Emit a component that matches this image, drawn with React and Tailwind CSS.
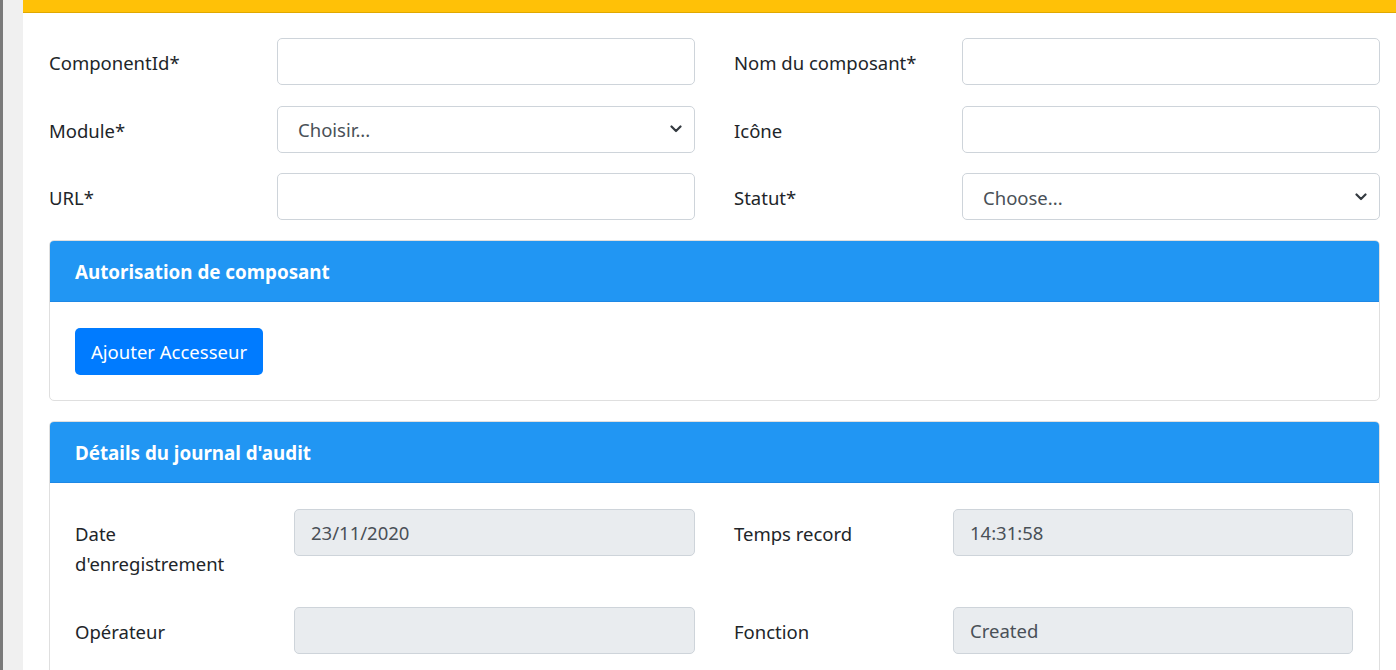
import React from 'react'

const font = { fontFamily: '"Segoe UI", "Noto Sans", "Open Sans", sans-serif' }

const Chevron = () => (
  <svg className="absolute right-[12px] top-1/2 -translate-y-1/2" width="12" height="8" viewBox="0 0 12 8">
    <path d="M1.5 1.5 L6 6 L10.5 1.5" fill="none" stroke="#343a40" strokeWidth="2.2" strokeLinecap="round" strokeLinejoin="round" />
  </svg>
)

const Input = ({ value = '', disabled }) => (
  <div
    className={`h-[47px] rounded-[5px] border border-[#ced4da] px-[16px] pt-[2px] flex items-center text-[#495057] ${
      disabled ? 'bg-[#e9ecef]' : 'bg-white'
    }`}
  >
    {value}
  </div>
)

const Select = ({ placeholder }) => (
  <div className="relative h-[47px] rounded-[5px] border border-[#ced4da] bg-white pl-[20px] pt-[2px] flex items-center text-[#495057]">
    {placeholder}
    <Chevron />
  </div>
)

const Label = ({ children }) => (
  <div className="pt-[10px] leading-[30px] text-[#212529]">{children}</div>
)

const Card = ({ title, children }) => (
  <div className="rounded-[5px] border border-[#dfdfdf] overflow-hidden">
    <div className="h-[61px] bg-[#2196f3] border-b border-[#1e88e5] flex items-center px-[25px] pt-[3px] text-white font-bold text-[18.8px]">
      {title}
    </div>
    <div className="px-[25px] pt-[25.5px] pb-[25.5px]">{children}</div>
  </div>
)

export default function App() {
  return (
    <div className="flex min-h-[670px] text-[18.5px]" style={font}>
      {/* bande gauche */}
      <div className="w-[23px] shrink-0 bg-[#f0f0f0] border-l-[3px] border-[#7a7a7a]" />

      <div className="flex-1 bg-white">
        <div className="h-[13px] bg-[#ffc107] border-b border-[#e0a800]" />

        <div className="pl-[26px] pt-[25px]">
          <div className="grid grid-cols-[228px_418px_39px_228px_418px] gap-y-[20.5px]">
            <Label>ComponentId*</Label>
            <Input />
            <div />
            <Label>Nom du composant*</Label>
            <Input />

            <Label>Module*</Label>
            <Select placeholder="Choisir..." />
            <div />
            <Label>Icône</Label>
            <Input />

            <Label>URL*</Label>
            <Input />
            <div />
            <Label>Statut*</Label>
            <Select placeholder="Choose..." />
          </div>

          <div className="w-[1331px] mt-[20px] flex flex-col gap-[20px]">
            <Card title="Autorisation de composant">
              <button className="h-[47px] px-[16px] pt-[1px] rounded-[5px] bg-[#007bff] text-white">
                Ajouter Accesseur
              </button>
            </Card>

            <Card title="Détails du journal d'audit">
              <div className="grid grid-cols-[219px_401px_39px_219px_400px] gap-y-[28px]">
                <Label>
                  Date
                  <br />
                  d'enregistrement
                </Label>
                <Input value="23/11/2020" disabled />
                <div />
                <Label>Temps record</Label>
                <Input value="14:31:58" disabled />

                <Label>Opérateur</Label>
                <Input disabled />
                <div />
                <Label>Fonction</Label>
                <Input value="Created" disabled />
              </div>
            </Card>
          </div>
        </div>
      </div>
    </div>
  )
}
